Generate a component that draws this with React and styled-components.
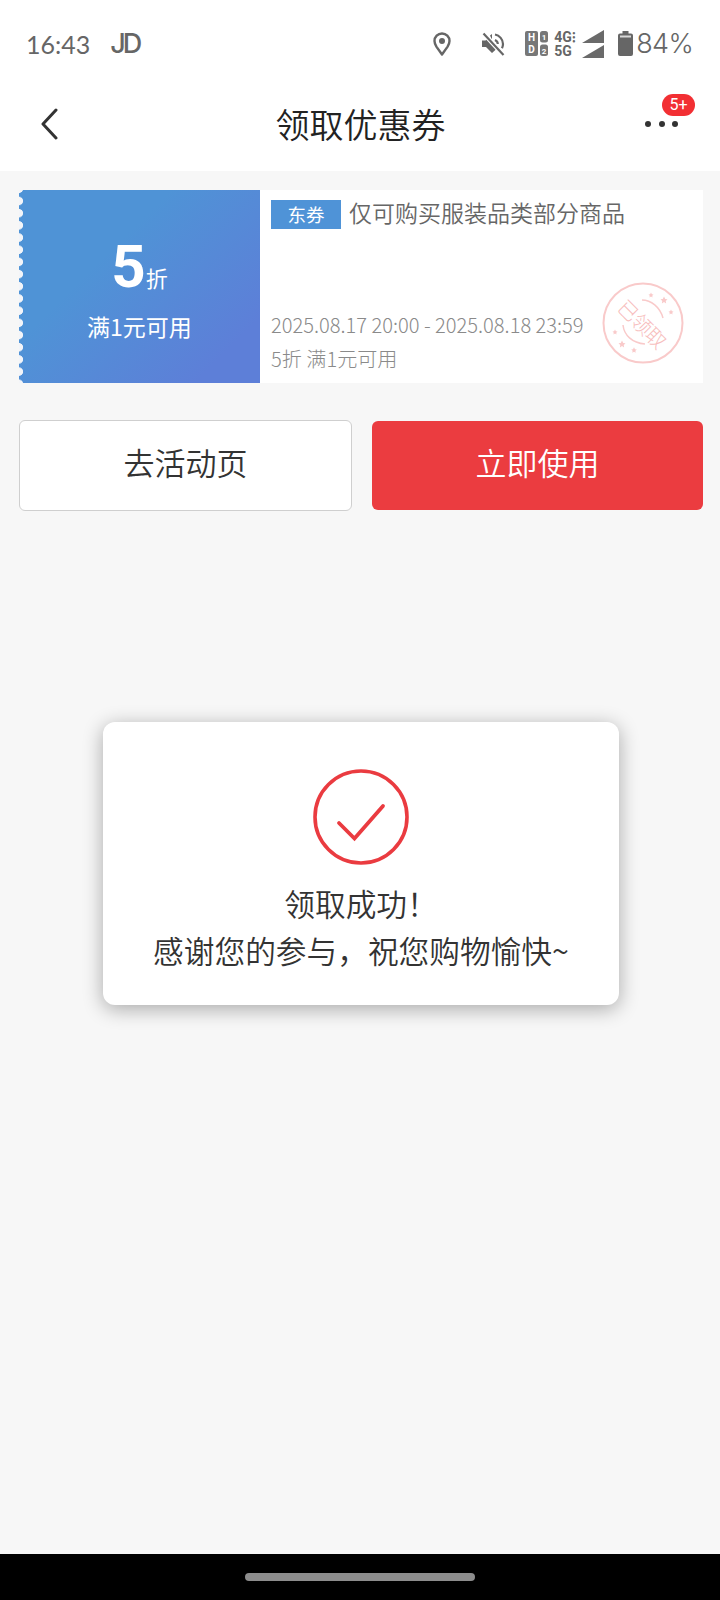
import React from "react";
import styled, { createGlobalStyle } from "styled-components";

const GlobalStyle = createGlobalStyle`
  html, body { margin: 0; padding: 0; background: #f7f7f7; }
  * { box-sizing: border-box; }
  body { font-family: "Noto Sans CJK SC", "Noto Sans", sans-serif; }
`;

function PinIcon() {
  return (
    <svg width="18" height="24" viewBox="0 0 18 24">
      <path d="M9 1.500C4.800 1.500 1.500 4.800 1.500 9c0 2 .8 3.800 1.900 5.600L9 22.500l5.600-7.900c1.100-1.800 1.900-3.600 1.900-5.600 0-4.200-3.300-7.500-7.500-7.500z" fill="none" stroke="#666" strokeWidth="2.400" strokeLinejoin="round" />
      <circle cx="9" cy="9" r="3" fill="#666" />
    </svg>
  );
}

function MuteIcon() {
  return (
    <svg width="24" height="24" viewBox="0 0 24 24">
      <path d="M1 8.500h3.500L7 6l9 10v.5l-5 4.500-6-6H1z" fill="#666" />
      <path d="M9 3.500l2-1.500v6z" fill="#666" />
      <path d="M14 2.500c4.500 1 8 4.800 8 9.500 0 1.600-.4 3-1 4.300M14 8c1.600.8 2.800 2.200 2.800 4" fill="none" stroke="#666" strokeWidth="2.200" />
      <path d="M2.500 1.500l20 21.500" stroke="#fff" strokeWidth="4.500" />
      <path d="M2.500 1.500l20 21.500" stroke="#666" strokeWidth="2.200" />
    </svg>
  );
}

function SimIcon() {
  return (
    <svg width="23" height="25" viewBox="0 0 23 25">
      <rect x="0" y="0" width="13" height="25" rx="2" fill="#777" />
      <rect x="15" y="0" width="8" height="11.500" rx="2.500" fill="#777" />
      <rect x="15" y="13.500" width="8" height="11.500" rx="2.500" fill="#777" />
      <text x="6.500" y="10" textAnchor="middle" fontSize="10" fontWeight="700" fontFamily="Roboto" fill="#fff">H</text>
      <text x="6.500" y="22" textAnchor="middle" fontSize="10" fontWeight="700" fontFamily="Roboto" fill="#fff">D</text>
      <text x="19" y="9" textAnchor="middle" fontSize="8" fontWeight="700" fontFamily="Roboto" fill="#fff">1</text>
      <text x="19" y="22.500" textAnchor="middle" fontSize="8" fontWeight="700" fontFamily="Roboto" fill="#fff">2</text>
    </svg>
  );
}

function SignalIcon() {
  return (
    <svg width="22" height="28" viewBox="0 0 22 28">
      <path d="M0 13L22 0v13z" fill="#6a6a6a" />
      <path d="M0 28l22-13v13z" fill="#6a6a6a" />
    </svg>
  );
}

function BatteryIcon() {
  return (
    <svg width="15" height="25" viewBox="0 0 15 25">
      <path d="M4.500 0h6v2.500h2.500a2 2 0 0 1 2 2V23a2 2 0 0 1-2 2H2a2 2 0 0 1-2-2V4.500a2 2 0 0 1 2-2h2.500z" fill="#666" />
      <rect x="2" y="4.500" width="11" height="2" fill="#fff" opacity=".75" />
    </svg>
  );
}

function BackIcon() {
  return (
    <svg width="18" height="32" viewBox="0 0 18 32">
      <path d="M16 2L3 16l13 14" fill="none" stroke="#333" strokeWidth="3" strokeLinecap="round" strokeLinejoin="round" />
    </svg>
  );
}

function CheckCircle() {
  return (
    <svg width="96" height="96" viewBox="0 0 96 96">
      <circle cx="48" cy="48" r="46" fill="none" stroke="#ea3b40" strokeWidth="3.600" />
      <path d="M26 54l15.500 15.500L70 37" fill="none" stroke="#ea3b40" strokeWidth="3.800" strokeLinecap="round" />
    </svg>
  );
}

function StampArt() {
  const stars = [[49, 13, 2.500], [62, 18, 3.500], [69, 30, 2.500], [13, 50, 2.500], [20, 62, 3.500], [32, 68, 2.800]];
  return (
    <svg width="82" height="82" viewBox="0 0 82 82">
      <circle cx="41" cy="41" r="39.500" fill="none" stroke="#f9caca" strokeWidth="2" />
      <path d="M40 18c9 0 18 7 21 18" fill="none" stroke="#f9caca" strokeWidth="1.500" />
      <path d="M21 43c1 10 9 18 22 19" fill="none" stroke="#f9caca" strokeWidth="1.500" />
      {stars.map(([x, y, r]) => (
        <polygon
          key={`${x}-${y}`}
          fill="#f9caca"
          points={`${x},${y - r} ${x + r * 0.35},${y - r * 0.3} ${x + r},${y - r * 0.2} ${x + r * 0.5},${y + r * 0.3} ${x + r * 0.6},${y + r} ${x},${y + r * 0.6} ${x - r * 0.6},${y + r} ${x - r * 0.5},${y + r * 0.3} ${x - r},${y - r * 0.2} ${x - r * 0.35},${y - r * 0.3}`}
        />
      ))}
    </svg>
  );
}

function App() {
  return (
    <Page>
      <GlobalStyle />
      <TopArea>
        <StatusBar>
          <StatusLeft>
            <Clock>16:43</Clock>
            <CarrierMark>JD</CarrierMark>
          </StatusLeft>
          <StatusRight>
            <PinIcon />
            <MuteSlot><MuteIcon /></MuteSlot>
            <SimIcon />
            <NetStack>
              <span>4G⁝</span>
              <span>5G</span>
            </NetStack>
            <SignalIcon />
            <BatterySlot><BatteryIcon /></BatterySlot>
            <Percent>84%</Percent>
          </StatusRight>
        </StatusBar>
        <NavBar>
          <BackButton><BackIcon /></BackButton>
          <NavTitle>领取优惠券</NavTitle>
          <MoreButton>
            <Dot /><Dot /><Dot />
            <Badge>5+</Badge>
          </MoreButton>
        </NavBar>
      </TopArea>

      <Content>
        <Coupon>
          <CouponLeft>
            <Amount>5<AmountUnit>折</AmountUnit></Amount>
            <Threshold>满1元可用</Threshold>
          </CouponLeft>
          <CouponRight>
            <CouponHead>
              <Tag>东券</Tag>
              <CouponTitle>仅可购买服装品类部分商品</CouponTitle>
            </CouponHead>
            <CouponFoot>
              <Meta>2025.08.17 20:00 - 2025.08.18 23:59</Meta>
              <Meta>5折 满1元可用</Meta>
            </CouponFoot>
            <Stamp>
              <StampArt />
              <StampText>已领取</StampText>
            </Stamp>
          </CouponRight>
        </Coupon>

        <Actions>
          <OutlineButton>去活动页</OutlineButton>
          <PrimaryButton>立即使用</PrimaryButton>
        </Actions>
      </Content>

      <Toast>
        <CheckCircle />
        <ToastText>
          领取成功！
          <br />
          感谢您的参与，祝您购物愉快~
        </ToastText>
      </Toast>

      <HomeBar>
        <HomePill />
      </HomeBar>
    </Page>
  );
}

const Page = styled.div`
  position: relative;
  width: 720px;
  height: 1600px;
  display: flex;
  flex-direction: column;
  background: #f7f7f7;
  overflow: hidden;
`;
const TopArea = styled.div`
  background: #fff;
  height: 171px;
  display: flex;
  flex-direction: column;
`;
const StatusBar = styled.div`
  height: 84px;
  padding: 3px 27px 0 26px;
  display: flex;
  align-items: center;
  justify-content: space-between;
  color: #666;
`;
const StatusLeft = styled.div`
  display: flex;
  align-items: center;
  gap: 20px;
`;
const Clock = styled.span`
  font-family: Lato, sans-serif;
  font-size: 25px;
  font-weight: 400;
`;
const CarrierMark = styled.span`
  font-family: Inter, sans-serif;
  font-size: 27px;
  font-weight: 500;
  letter-spacing: -3px;
`;
const StatusRight = styled.div`
  display: flex;
  align-items: center;
`;
const MuteSlot = styled.div`
  margin: 0 20px 0 30px;
  display: flex;
`;
const NetStack = styled.div`
  width: 28px;
  margin-left: 6px;
  display: flex;
  flex-direction: column;
  font-family: Roboto, sans-serif;
  font-size: 14px;
  font-weight: 700;
  line-height: 14px;
  color: #666;
`;
const BatterySlot = styled.div`
  margin: 0 3px 0 14px;
  display: flex;
`;
const Percent = styled.span`
  font-family: Inter, sans-serif;
  font-size: 27px;
  font-weight: 300;
  letter-spacing: -0.700px;
`;
const NavBar = styled.div`
  flex: 1;
  padding: 0 42px 8px 40px;
  display: flex;
  align-items: center;
  justify-content: space-between;
`;
const BackButton = styled.div`
  width: 18px;
  display: flex;
`;
const NavTitle = styled.div`
  margin-left: 18px;
  font-size: 34px;
  font-weight: 350;
  line-height: 46px;
  color: #222;
`;
const MoreButton = styled.div`
  position: relative;
  display: flex;
  gap: 7.500px;
  width: 33px;
`;
const Dot = styled.span`
  width: 6px;
  height: 6px;
  border-radius: 50%;
  background: #333;
`;
const Badge = styled.span`
  position: absolute;
  left: 17px;
  top: -27px;
  width: 33px;
  height: 22px;
  border-radius: 11px;
  background: #f22f33;
  color: #fff;
  font-family: Roboto, sans-serif;
  font-size: 16px;
  line-height: 22px;
  text-align: center;
`;
const Content = styled.div`
  padding: 19px 17px 0 19px;
  display: flex;
  flex-direction: column;
  gap: 37px;
`;
const Coupon = styled.div`
  height: 193px;
  display: flex;
  background: #fff;
`;
const CouponLeft = styled.div`
  position: relative;
  width: 241px;
  background: linear-gradient(135deg, #4f93d6 35%, #5d7fd8 85%);
  color: #fff;
  border-radius: 4px 0 0 4px;
  display: flex;
  flex-direction: column;
  align-items: center;
  padding-top: 42px;

  &::before {
    content: "";
    position: absolute;
    left: 0;
    top: 0;
    bottom: 0;
    width: 6px;
    background: radial-gradient(circle at 0 50%, #f3f5f9 3.800px, transparent 4.400px) 0 4.900px / 6px 12.200px repeat-y;
  }
`;
const Amount = styled.div`
  font-family: Roboto, sans-serif;
  font-size: 60px;
  font-weight: 700;
  line-height: 70px;
  display: flex;
  align-items: baseline;
`;
const AmountUnit = styled.span`
  font-family: "Noto Sans CJK SC", sans-serif;
  font-size: 22px;
  font-weight: 400;
  line-height: 30px;
`;
const Threshold = styled.div`
  font-size: 23px;
  line-height: 30px;
  margin-top: 9px;
`;
const CouponRight = styled.div`
  position: relative;
  flex: 1;
  padding: 8px 11px 10px;
  display: flex;
  flex-direction: column;
  justify-content: space-between;
`;
const CouponHead = styled.div`
  display: flex;
  align-items: flex-start;
  gap: 8px;
`;
const Tag = styled.span`
  width: 70px;
  height: 29px;
  margin-top: 2px;
  background: #4f93d7;
  color: #fff;
  font-size: 18.500px;
  line-height: 29px;
  text-align: center;
`;
const CouponTitle = styled.span`
  font-size: 23px;
  font-weight: 350;
  line-height: 28px;
  color: #666;
`;
const CouponFoot = styled.div`
  display: flex;
  flex-direction: column;
  gap: 6px;
`;
const Meta = styled.div`
  font-size: 20.100px;
  font-weight: 300;
  line-height: 28px;
  color: #8a8a8a;
`;
const Stamp = styled.div`
  position: absolute;
  left: 342px;
  top: 92px;
  width: 82px;
  height: 82px;
  display: flex;
`;
const StampText = styled.span`
  position: absolute;
  inset: 0;
  display: flex;
  align-items: center;
  justify-content: center;
  font-size: 20px;
  font-weight: 300;
  letter-spacing: -0.500px;
  color: #f7bdbd;
  transform: rotate(45deg);
`;
const Actions = styled.div`
  display: flex;
  align-items: center;
  gap: 20px;
`;
const ActionButton = styled.div`
  height: 91px;
  padding-bottom: 8px;
  border-radius: 6px;
  display: flex;
  align-items: center;
  justify-content: center;
  font-size: 31px;
  font-weight: 350;
`;
const OutlineButton = styled(ActionButton)`
  width: 333px;
  background: #fff;
  border: 1px solid #cfcfcf;
  color: #333;
`;
const PrimaryButton = styled(ActionButton)`
  width: 331px;
  height: 89px;
  background: #eb3c40;
  color: #fff;
`;
const Toast = styled.div`
  position: absolute;
  left: 103px;
  top: 722px;
  width: 516px;
  height: 283px;
  padding-top: 47px;
  background: #fff;
  border-radius: 12px;
  box-shadow: 0 4px 20px rgba(0, 0, 0, 0.32);
  display: flex;
  flex-direction: column;
  align-items: center;
`;
const ToastText = styled.div`
  margin-top: 14px;
  font-size: 30.700px;
  font-weight: 350;
  line-height: 47px;
  color: #333;
  text-align: center;
`;
const HomeBar = styled.div`
  margin-top: auto;
  height: 46px;
  background: #000;
  display: flex;
  justify-content: center;
  padding-top: 19px;
`;
const HomePill = styled.div`
  width: 230px;
  height: 8px;
  border-radius: 4px;
  background: #8c8c8c;
`;

export default App;
